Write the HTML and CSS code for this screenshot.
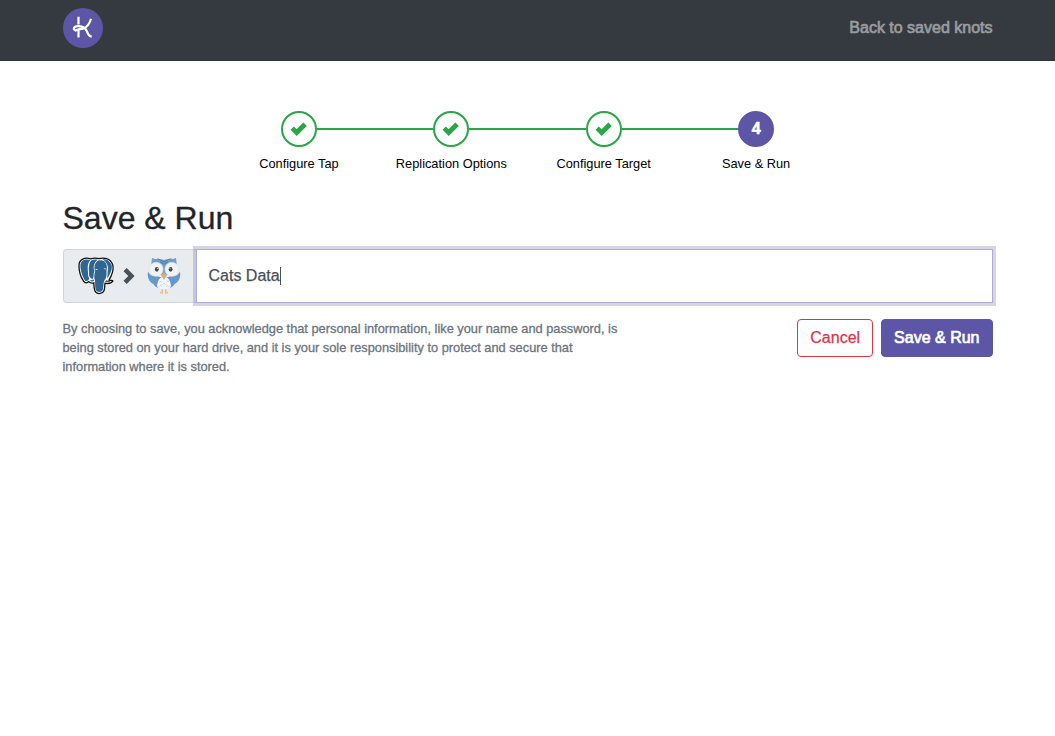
FILE: index.html
```html
<!DOCTYPE html>
<html lang="en">
<head>
<meta charset="utf-8">
<title>Knots</title>
<link rel="stylesheet" href="styles.css">
</head>
<body>
<header class="navbar">
  <div class="container navbar-inner">
    <svg class="logo" viewBox="0 0 40 40" aria-label="Knots">
      <circle cx="20" cy="20" r="20" fill="#5d55a5"/>
      <g fill="none" stroke="#fff" stroke-width="2.2">
        <path d="M15.5 8.8V16.6M15.5 21.2V29.4"/>
        <path d="M28 10.8C26.8 15.2 24 19.4 20 20.6C16.8 21.4 13.2 21 11.6 23.2"/>
        <path d="M11.4 22C9.8 19.6 12.3 17.9 15.5 18.1C20 18.3 22.9 20.4 23.9 23.4C24.9 26.5 25.8 28.3 28.7 28.6"/>
      </g>
    </svg>
    <a class="nav-link">Back to saved knots</a>
  </div>
</header>
<main class="container">
  <ol class="steps">
    <li class="step done"><span class="circle"><svg class="check" viewBox="0 0 18 16"><path d="M.6 8.8 3.8 5.6 6.6 8.3 13.4 1.5 16.8 4.9 6.7 15Z"/></svg></span><span class="label">Configure Tap</span></li>
    <li class="step done"><span class="circle"><svg class="check" viewBox="0 0 18 16"><path d="M.6 8.8 3.8 5.6 6.6 8.3 13.4 1.5 16.8 4.9 6.7 15Z"/></svg></span><span class="label">Replication Options</span></li>
    <li class="step done"><span class="circle"><svg class="check" viewBox="0 0 18 16"><path d="M.6 8.8 3.8 5.6 6.6 8.3 13.4 1.5 16.8 4.9 6.7 15Z"/></svg></span><span class="label">Configure Target</span></li>
    <li class="step active"><span class="circle">4</span><span class="label">Save &amp; Run</span></li>
  </ol>
  <h2 class="title">Save &amp; Run</h2>
  <div class="input-group">
    <div class="prepend">
      <svg class="tap" viewBox="0 0 36 38">
        <path d="M12.5 1.8C7 .2 1.2 2 1 8.2C.9 13.5 3 20.5 5.5 24.1C7.2 26.6 9.3 26 10.8 24.6C12.4 26.4 14.3 26.2 15.8 25.8C16.1 29 15.8 33 17.8 35.2C19.6 37.3 24.7 37 26 33.7C26.9 31.5 26.7 28.5 27 26.2C30 26.8 33.5 26 35 23.9C34.5 22.8 32.5 23.6 31 23.1C33.6 19.1 36.3 11.9 34.5 7.2C32.2 1.2 25.7.3 21.1 1.6C18.2 1 15.3 1 12.5 1.8Z" fill="#fff" stroke="#111" stroke-width="1.3"/>
        <path d="M12.2 3.2C7 1.5 2.6 3.5 2.4 8.6C2.3 13.1 4.4 20 6.8 23.2C8.3 25 9.7 23.8 11.4 21.7C9.7 19.3 10.2 16 9.8 12.7C9.5 9.1 9.9 5.6 12.2 3.2Z" fill="#2f6792"/>
        <path d="M13.5 3.3C10.6 6.5 10.6 11.4 11 14.7C10.8 18 11.1 20.8 14.6 22C16.2 20.6 15 17 16.5 14.3C14.9 10.5 15.8 5.9 19.6 2.8C17.5 2.3 15.1 2.5 13.5 3.3Z" fill="#2f6792"/>
        <path d="M20 3.6C15.9 6.9 16 11 17.2 14.4C16.2 16.9 15.9 20 16.9 23.2C17.4 27.2 16.7 31.9 18.6 34.1C20.9 36 24.5 35 25 32C25.7 28.1 25.2 24.2 27.5 21.7C29.4 18.8 28 14.9 28.9 11.8C29.5 7.5 27.2 1.7 20 3.6Z" fill="#2f6792"/>
        <path d="M24.2 2.3C29 4.9 30.8 9.7 29.7 13.9C29.4 16.6 29.8 19.1 28.9 21.8C31.8 18.5 35.1 11.6 33.4 7.6C31.6 3.4 27.8 1.8 24.2 2.3ZM11.4 23.8C13.2 24.8 15 24.7 16 23.8L15.8 22.4ZM26.9 24.7C29.4 25.3 31.6 25 32.9 24.4L28.3 23.2Z" fill="#2f6792"/>
        <path d="M17 11.9 20 12 18.6 13ZM25.5 11.6 28.5 11.6 27.3 12.6Z" fill="#fff"/>
      </svg>
      <svg class="chevron" viewBox="0 0 12 18"><path d="M.5 4.2 3.7 1 11.6 9 3.7 17 .5 13.8 5.3 9Z"/></svg>
      <svg class="target" viewBox="0 0 34 38">
        <path d="M5 .9C9 2.8 12.5 1.2 17 3C21.5 1.2 25 2.8 29 .9L29.8 7.5 21 18H13L4.2 7.5Z" fill="#6f9fcd"/>
        <path d="M1 14.8C3 18.6 6 19.8 10 19.3L14.8 20.5L11.5 31C9 29.8 6.8 29 6.5 27C3 25.5-.2 21 1 14.8ZM33 14.8C31 18.6 28 19.8 24 19.3L19.2 20.5L22.5 31C25 29.8 27.2 29 27.5 27C31 25.5 34.2 21 33 14.8Z" fill="#6698c8"/>
        <path d="M10 29C10.6 23.2 13 20 17 19.4C21 20 23.4 23.2 24 29C22.5 33.8 11.5 33.8 10 29Z" fill="#f3f4f7"/>
        <circle cx="9.1" cy="12.2" r="7" fill="#f1f2f2" stroke="#d8dde2" stroke-width=".5"/>
        <circle cx="24.9" cy="12.2" r="7" fill="#f1f2f2" stroke="#d8dde2" stroke-width=".5"/>
        <ellipse cx="9.8" cy="12.3" rx="1.9" ry="2.4" fill="#454647"/>
        <ellipse cx="23.6" cy="12.3" rx="1.9" ry="2.4" fill="#454647"/>
        <circle cx="10.5" cy="11.3" r=".5" fill="#fff"/><circle cx="23" cy="11.3" r=".5" fill="#fff"/>
        <path d="M10.5 1.4 17 4.9 23.5 1.4M13 4.7 17 7.1 21 4.7" fill="none" stroke="#466e94" stroke-width=".7"/>
        <path d="M17 15 19.8 18.2 17 23 14.2 18.2Z" fill="#d8ad75"/>
        <path d="M12.4 25.5 13.6 24.2 14.9 25.5M15.7 27.7 17.2 26.4 18.7 27.7M19.3 25.2 20.8 23.9 22 25.2M12.4 29.4 13.7 28.2 15 29.4M19 29.8 20.5 28.6 21.7 29.8" fill="none" stroke="#a9b8ce" stroke-width=".6"/>
        <path d="M15.3 32V37M13.2 36 15.3 34.6M18.7 32V37M20.8 36 18.7 34.6" fill="none" stroke="#e7bf91" stroke-width="1.4"/>
      </svg>
    </div>
    <div class="field"><span class="value">Cats Data</span></div>
  </div>
  <div class="footer">
    <p class="note">By choosing to save, you acknowledge that personal information, like your name and password, is being stored on your hard drive, and it is your sole responsibility to protect and secure that information where it is stored.</p>
    <div class="actions">
      <button class="btn cancel">Cancel</button>
      <button class="btn primary">Save &amp; Run</button>
    </div>
  </div>
</main>
</body>
</html>
```
FILE: styles.css
```css
* { box-sizing: border-box; }
body {
  margin: 0;
  background: #fff;
  color: #212529;
  font: 16px/1.5 "Liberation Sans", Arial, sans-serif;
}
.container { width: 960px; margin: 0 auto; padding: 0 15px; }
.navbar { height: 61px; padding-top: 8px; background: #343a40; }
.navbar-inner { display: flex; justify-content: space-between; }
.logo { width: 40px; height: 40px; }
.nav-link { margin-top: 8px; line-height: 24px; color: #999c9f; -webkit-text-stroke: .7px; }
.steps {
  display: grid;
  grid-template-columns: repeat(4, 152.4px);
  justify-content: center;
  margin: 0;
  padding: 50px 0 0;
  list-style: none;
}
.step {
  display: grid;
  grid-template-columns: 1fr 36px 1fr;
  align-items: center;
  row-gap: 7px;
}
.step::before, .step::after { content: ""; height: 2px; background: #28a745; grid-row: 1; }
.step::before { grid-column: 1; }
.step::after { grid-column: 3; }
.step:first-child::before, .step:last-child::after { background: transparent; }
.circle {
  grid-area: 1 / 2;
  display: flex;
  align-items: center;
  justify-content: center;
  width: 36px;
  height: 36px;
  border: 2px solid #28a745;
  border-radius: 50%;
}
.active .circle { background: #5d55a5; border-color: #5d55a5; color: #fff; font-weight: bold; -webkit-text-stroke: .6px; }
.check { width: 18px; height: 16px; fill: #28a745; }
.label { grid-area: 2 / 1 / 3 / 4; color: #000; font-size: 12.8px; line-height: 20px; text-align: center; }
.title { margin: 25px 0 12px; font-size: 32px; font-weight: 400; line-height: 38px; -webkit-text-stroke: .3px; }
.input-group { display: flex; height: 54px; }
.prepend {
  display: flex;
  align-items: center;
  width: 133px;
  padding-left: 14px;
  background: #e9ecef;
  border: 1px solid #ced4da;
  border-right: 0;
  border-radius: 4px 0 0 4px;
}
.tap { width: 36px; height: 38px; }
.chevron { width: 12px; height: 18px; margin: 0 12px 0 9px; fill: #495057; }
.target { width: 34px; height: 38px; }
.field {
  flex: 1;
  display: flex;
  align-items: center;
  padding: 0 12px;
  border: 1px solid #afabd4;
  background: #fff;
  color: #495057;
  box-shadow: 0 0 0 3px rgba(93, 85, 165, .25);
  -webkit-text-stroke: .25px;
}
.value { border-right: 1px solid #495057; line-height: 18px; }
.footer { display: flex; justify-content: space-between; align-items: flex-start; margin-top: 16px; }
.note { width: 560px; margin: 0; color: #6c757d; font-size: 12.8px; line-height: 19.2px; -webkit-text-stroke: .3px; }
.actions { display: flex; gap: 8px; }
.btn {
  height: 38px;
  padding: 0 12px;
  border: 1px solid;
  border-radius: 4px;
  font: inherit;
  line-height: 24px;
}
.cancel { background: #fff; color: #dc3545; -webkit-text-stroke: .25px; }
.primary { background: #5d55a5; border-color: #5d55a5; color: #fff; -webkit-text-stroke: .7px; }
```
